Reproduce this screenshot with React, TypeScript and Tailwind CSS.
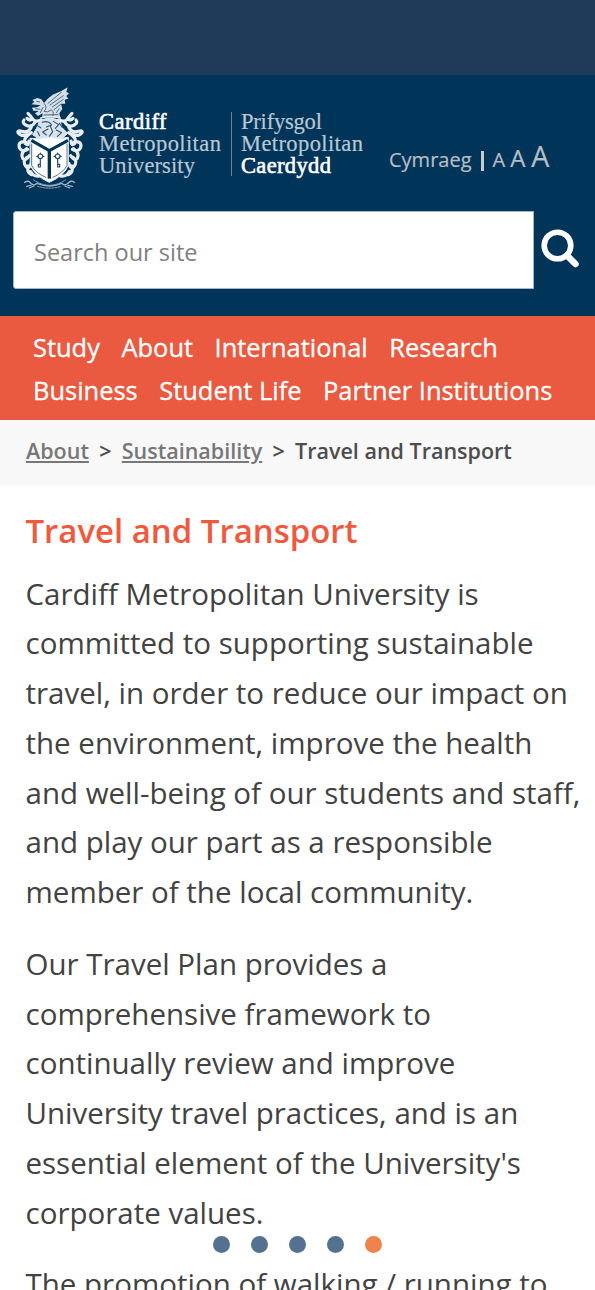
const FONT = "font-['Open_Sans','Noto_Sans',sans-serif]";

function Crest() {
  return (
    <svg viewBox="45 48 210 312" className="h-[104px] w-[70px] shrink-0" preserveAspectRatio="none" fill="none" stroke="#e8eef3" strokeLinecap="round" strokeLinejoin="round">
      {/* dragon */}
      <g stroke="none" fill="#d3dee7">
        <path d="M97 90 L112 84 L124 88 L132 99 L143 86 L158 74 L184 63 L203 52 L199 66 L207 70 L199 78 L205 86 L194 89 L196 101 L183 101 L187 117 L178 130 L181 143 L126 143 L128 130 L114 138 L105 130 L116 123 L100 122 L96 113 L111 112 L122 106 L108 104 L94 103 L103 96 Z" />
      </g>
      <g stroke="#33597a" strokeWidth="2.6">
        <path d="M144 100 L184 67 M150 105 L190 77 M157 111 L190 88 M162 119 L182 103 M133 101 Q144 113 132 124 Q143 130 154 119 Q165 130 157 140 M110 94 L119 96 M107 116 L120 118 M132 135 L174 134 M121 128 L129 112 M169 128 L177 117" />
      </g>
      <path d="M122 144 Q149 136 181 144" strokeWidth="4" />
      {/* mantling */}
      <g strokeWidth="9.5">
        <path d="M123 150 Q105 158 98 147 Q91 137 84 130 M98 147 Q88 154 81 145 M105 158 Q94 174 77 165 Q65 157 72 150 M94 171 Q85 190 65 184 Q52 180 54 188 Q65 201 82 194 M94 188 Q67 205 76 221 Q86 230 87 213 M78 217 Q53 211 58 233 Q66 248 83 238 M80 236 Q60 250 68 265 Q77 274 88 257 M81 262 Q65 275 79 291 Q89 298 93 281 M85 288 Q79 306 94 314 M92 305 Q100 321 119 318" />
        <path d="M177 150 Q195 158 202 147 Q209 137 216 130 M202 147 Q212 154 219 145 M195 158 Q206 174 223 165 Q235 157 228 150 M206 171 Q215 190 235 184 Q248 180 246 188 Q235 201 218 194 M206 188 Q233 205 224 221 Q214 230 213 213 M222 217 Q247 211 242 233 Q234 248 217 238 M220 236 Q240 250 232 265 Q223 274 212 257 M219 262 Q235 275 221 291 Q211 298 207 281 M215 288 Q221 306 206 314 M208 305 Q200 321 181 318" />
      </g>
      {/* helmet */}
      <path d="M121 151 Q149 139 179 151 L186 173 L203 190 L188 204 L112 204 L98 194 L109 176 Z" fill="#d8e2ea" strokeWidth="3" />
      <path d="M127 157 Q145 150 155 165 L139 171 M160 154 L176 164 L166 175 M144 177 L128 186 L139 195 M151 169 L158 185 L148 199 M169 180 L185 188 L172 199 M113 185 L119 197 M108 164 L123 174 M178 160 L187 172" stroke="#2c5375" strokeWidth="3.2" />
      {/* shield */}
      <path d="M91 205 Q120 209 148 202 Q176 209 205 202 V285 Q195 316 148 337 Q101 316 91 285 Z" fill="#fff" strokeWidth="3" />
      <path d="M94 211 L148 242 L204 211" stroke="#003459" strokeWidth="9" strokeLinecap="butt" />
      <path d="M148 239 V326" stroke="#003459" strokeWidth="10" strokeLinecap="butt" />
      <path d="M95 222 V286 Q105 308 137 322 M201 222 V286 Q190 308 159 322" stroke="#003459" strokeWidth="2" />
      <g stroke="#24496c" strokeWidth="3.5">
        <circle cx="121" cy="259" r="7" />
        <path d="M121 249 V252 M121 266 V291 M110 259 H114 M128 259 H132 M121 291 H115 V283 H121" />
        <circle cx="173" cy="259" r="7" />
        <path d="M173 249 V252 M173 266 V291 M162 259 H166 M180 259 H184 M173 291 H179 V283 H173" />
      </g>
      {/* motto ribbon */}
      <g stroke="#9fb4c6" strokeWidth="4">
        <path d="M74 337 Q86 329 92 340 Q102 349 111 340 Q148 356 185 340 Q194 349 204 340 Q212 329 223 337 M80 349 L93 346 M217 349 L204 346 M88 354 L102 348 M209 354 L195 348" />
        <path d="M101 330 Q123 345 148 346 Q174 345 196 330 M113 349 Q148 360 184 349" strokeWidth="3" strokeDasharray="5 4" />
      </g>
    </svg>
  );
}

function Wordmark() {
  return (
    <div className="flex shrink-0 font-['Liberation_Serif','Times_New_Roman',serif] text-[22.5px] leading-[22px] whitespace-nowrap text-[#b9c8d5] [-webkit-text-stroke:0.2px]">
      <div className="w-[132px]">
        <div className="tracking-[0.5px] text-white [-webkit-text-stroke:0.6px_white]">Cardiff</div>
        <div className="tracking-[0.4px]">Metropolitan</div>
        <div className="tracking-[0.1px]">University</div>
      </div>
      <div className="mt-[1px] h-[64px] w-px bg-[#6685a0]" />
      <div className="w-[128px] pl-[9px]">
        <div className="tracking-[-0.2px]">Prifysgol</div>
        <div className="tracking-[0.4px]">Metropolitan</div>
        <div className="tracking-[0.35px] text-white [-webkit-text-stroke:0.6px_white]">Caerdydd</div>
      </div>
    </div>
  );
}

const NAV = [
  ["Study", "About", "International", "Research"],
  ["Business", "Student Life", "Partner Institutions"],
];

const PARAGRAPHS = [
  [
    "Cardiff Metropolitan University is",
    "committed to supporting sustainable",
    "travel, in order to reduce our impact on",
    "the environment, improve the health",
    "and well-being of our students and staff,",
    "and play our part as a responsible",
    "member of the local community.",
  ],
  [
    "Our Travel Plan provides a",
    "comprehensive framework to",
    "continually review and improve",
    "University travel practices, and is an",
    "essential element of the University's",
    "corporate values.",
  ],
  ["The promotion of walking / running to"],
];

export default function App() {
  return (
    <div className={`relative h-[1290px] w-[595px] overflow-hidden bg-white ${FONT}`}>
      <div className="h-[75px] bg-[#203a5a]" />
      <header className="h-[241px] bg-[#003459]">
        <div className="flex h-[136px] pt-[11px] pl-[15px]">
          <Crest />
          <div className="ml-[14px] pt-[25px]"><Wordmark /></div>
          <div className="ml-[29px] flex items-baseline pt-[49px] text-[#b8bec5]">
            <a className="text-[20px] leading-[40px] [-webkit-text-stroke:0.2px]">Cymraeg</a>
            <span className="ml-[9px] h-[20px] w-[3px] translate-y-[4px] bg-[#c5cbd1]" />
            <a className="ml-[9px] text-[20px] [-webkit-text-stroke:0.2px]">A</a>
            <a className="ml-[5px] text-[24px] [-webkit-text-stroke:0.2px]">A</a>
            <a className="ml-[6px] text-[28.5px] [-webkit-text-stroke:0.2px]">A</a>
          </div>
        </div>
        <div className="flex pl-[13px]">
          <input
            placeholder="Search our site"
            className="h-[78px] w-[521px] rounded-l-[3px] border border-[#a5b5c3] bg-white px-[20px] pt-[4px] text-[23.5px] outline-none placeholder:text-[#808080]"
          />
          <button aria-label="Search" className="ml-[7px] h-[75px] w-[40px]">
            <svg viewBox="0 0 40 40" className="h-[40px] w-[40px]" fill="none" stroke="#fff">
              <circle cx="16.5" cy="16.5" r="13.3" strokeWidth="5.6" />
              <path d="M26 26.5 L34.5 35" strokeWidth="6.5" strokeLinecap="round" />
            </svg>
          </button>
        </div>
      </header>
      <nav className="h-[104px] bg-[#ea5a40] pt-[10px] pl-[33px] text-[25.45px] leading-[43px] text-white [-webkit-text-stroke:0.3px]">
        {NAV.map((row) => (
          <div key={row[0]} className="flex gap-[21.5px] whitespace-nowrap">
            {row.map((item) => <a key={item}>{item}</a>)}
          </div>
        ))}
      </nav>
      <div className="flex h-[66px] gap-[10.3px] bg-[#f8f8f8] pt-[11px] pl-[26px] text-[21.5px] leading-[40px] font-semibold whitespace-nowrap text-[#4d4d4d]">
        <a className="text-[#777] underline">About</a>
        <span>&gt;</span>
        <a className="text-[#777] underline">Sustainability</a>
        <span>&gt;</span>
        <span>Travel and Transport</span>
      </div>
      <main className="pl-[25.5px] text-[#424242]">
        <h1 className="pt-[21px] text-[32.95px] leading-[48px] font-semibold text-[#f0593e]">Travel and Transport</h1>
        <div className="flex flex-col gap-[22px] pt-[13.5px] text-[29.5px] leading-[49.75px]">
          {PARAGRAPHS.map((lines) => (
            <p key={lines[0]}>
              {lines.map((line) => <span key={line} className="block whitespace-nowrap">{line}</span>)}
            </p>
          ))}
        </div>
      </main>
      <div className="absolute top-[1236px] left-[213px] flex gap-[21px]">
        {[0, 1, 2, 3].map((i) => <span key={i} className="size-[17px] rounded-full bg-[#54728f]" />)}
        <span className="size-[17px] rounded-full bg-[#f0834d]" />
      </div>
    </div>
  );
}
